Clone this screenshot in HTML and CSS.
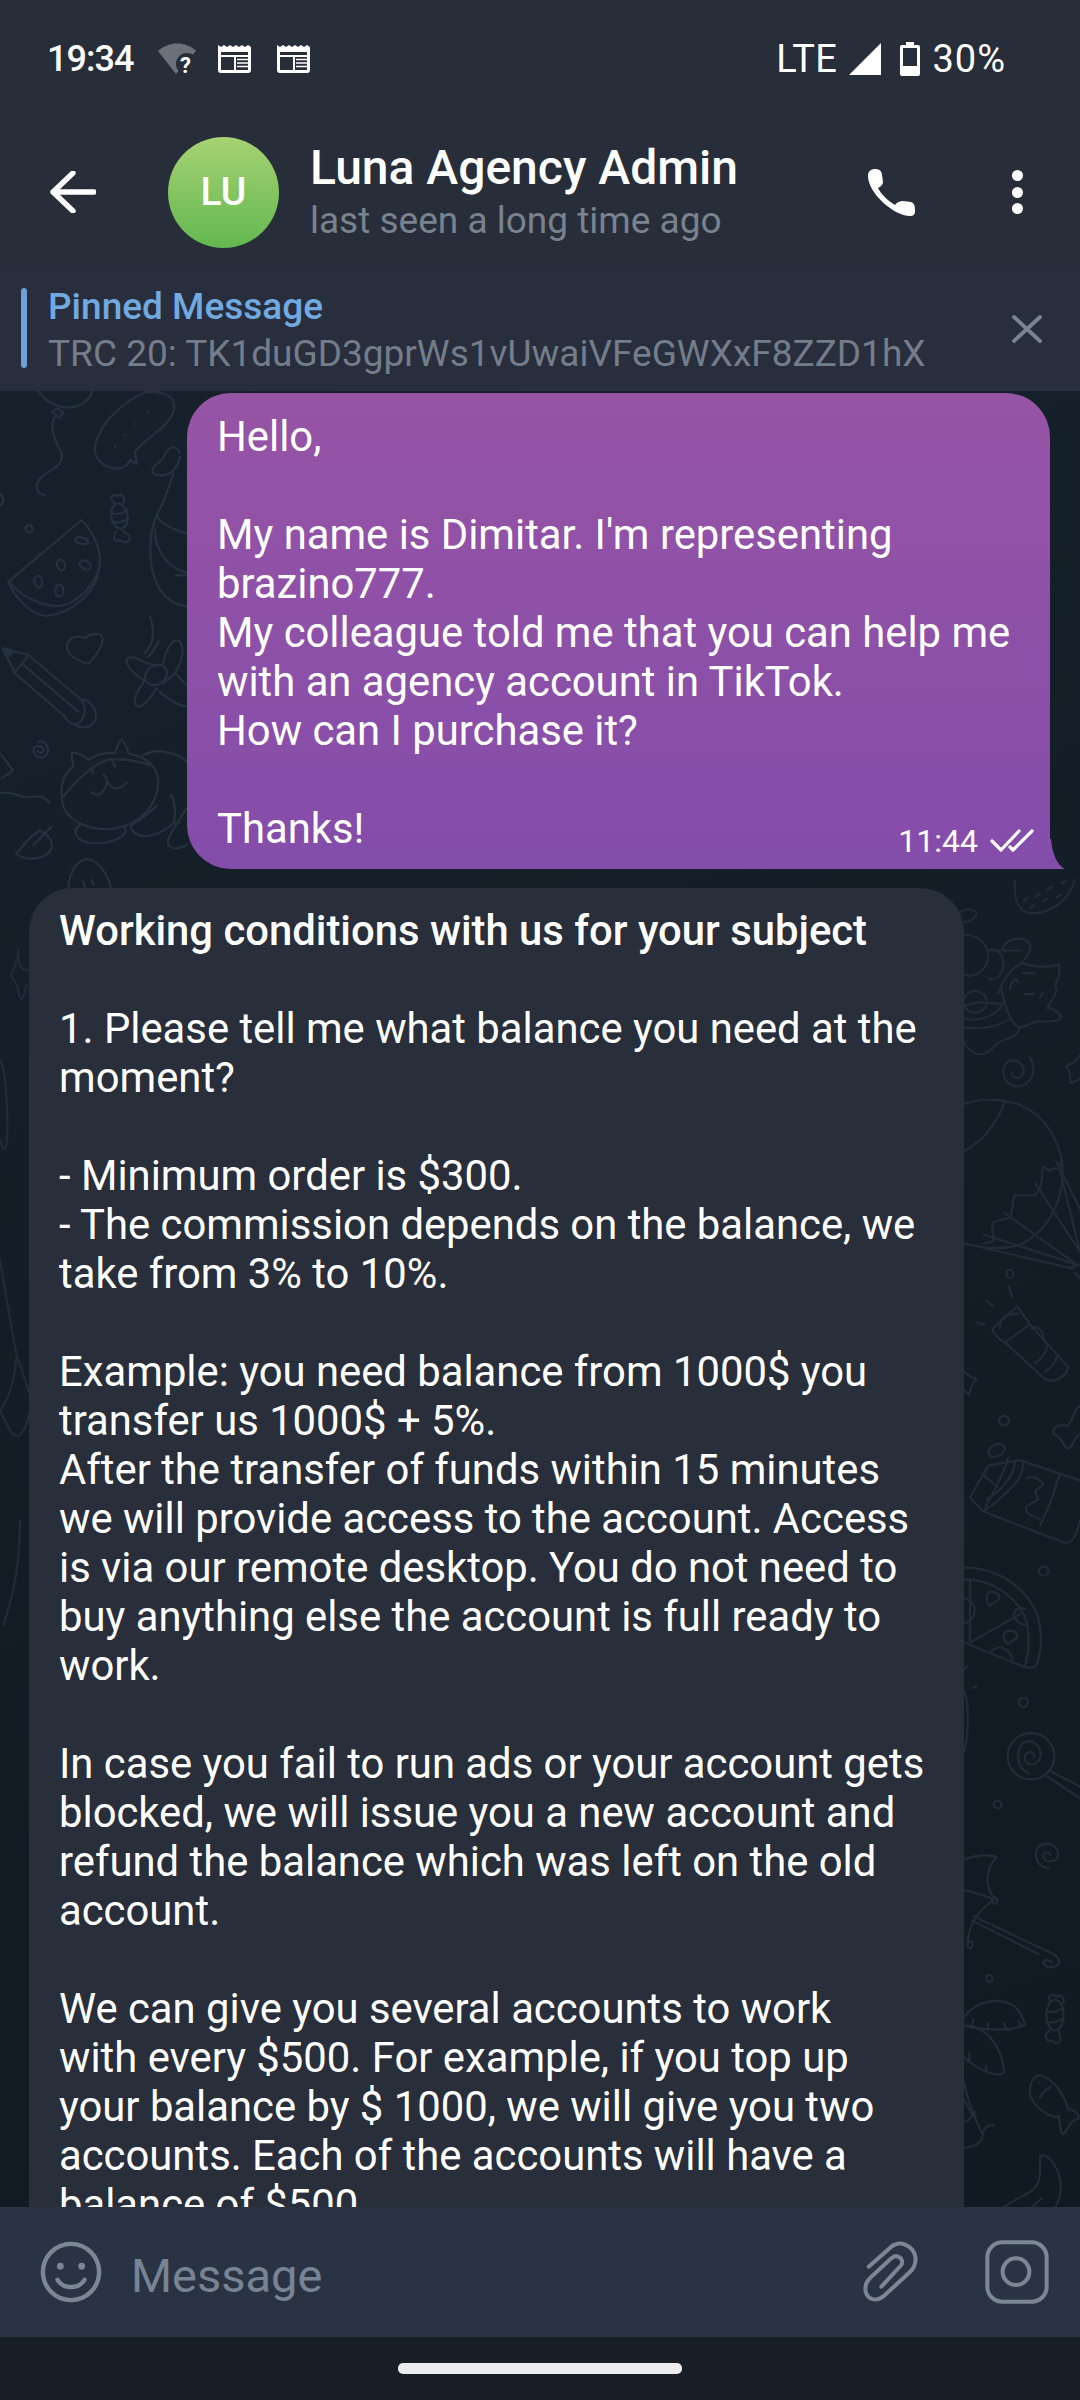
FILE: index.html
```html
<!DOCTYPE html>
<html lang="en">
<head>
    <meta charset="UTF-8">
    <meta name="viewport" content="width=device-width, initial-scale=1.0">
    <title>Luna Agency Admin</title>
    <link rel="stylesheet" href="styles.css">
</head>
<body>
    <div class="phone">
        <!-- status bar -->
        <div class="status-bar">
            <div class="status-left">
                <span class="clock">19:34</span>
                <svg class="wifi" width="38" height="32" viewBox="0 0 38 32">
                    <path d="M0 8 C11 -2 28 -2 38 8 L18 31 Z" fill="#6b707a"/>
                    <circle cx="29" cy="21" r="11" fill="#282d3a"/>
                    <text x="22" y="30" class="wifi-q">?</text>
                </svg>
                <svg width="33" height="30" viewBox="0 0 33 30" class="news">
                    <path d="M0 1 l3 2 3-2 3 2 3-2 3 2 3-2 3 2 3-2 3 2 3-2 3 2 V26 a3 3 0 0 1-3 3 H3 a3 3 0 0 1-3-3 Z" fill="#fff"/>
                    <path d="M3 8 H30 V26 H3 Z" fill="#282d3a"/>
                    <path d="M3 12 H30 M17 12 V26" stroke="#fff" stroke-width="2"/>
                    <path d="M19 15.500 H30 M19 19 H30 M19 22.500 H30" stroke="#fff" stroke-width="1.600"/>
                </svg>
                <svg width="33" height="30" viewBox="0 0 33 30" class="news">
                    <path d="M0 1 l3 2 3-2 3 2 3-2 3 2 3-2 3 2 3-2 3 2 3-2 3 2 V26 a3 3 0 0 1-3 3 H3 a3 3 0 0 1-3-3 Z" fill="#fff"/>
                    <path d="M3 8 H30 V26 H3 Z" fill="#282d3a"/>
                    <path d="M3 12 H30 M17 12 V26" stroke="#fff" stroke-width="2"/>
                    <path d="M19 15.500 H30 M19 19 H30 M19 22.500 H30" stroke="#fff" stroke-width="1.600"/>
                </svg>
            </div>
            <div class="status-right">
                <span class="lte">LTE</span>
                <svg width="32" height="32" viewBox="0 0 32 32"><path d="M32 0 V32 H0 Z" fill="#fff"/></svg>
                <svg class="battery" width="20" height="34" viewBox="0 0 20 34">
                    <path d="M6 0 H14 V3 H18 a2 2 0 0 1 2 2 V32 a2 2 0 0 1-2 2 H2 a2 2 0 0 1-2-2 V5 a2 2 0 0 1 2-2 H6 Z" fill="#fff"/>
                    <rect x="3" y="6" width="14" height="18" fill="#282d3a"/>
                </svg>
                <span class="pct">30%</span>
            </div>
        </div>

        <!-- chat header -->
        <div class="header">
            <svg class="back" width="46" height="42" viewBox="0 0 46 42">
                <path d="M3 21 H44 M23 2 L3 21 L23 40" fill="none" stroke="#fff" stroke-width="5.400" stroke-linecap="round" stroke-linejoin="round"/>
            </svg>
            <div class="avatar">LU</div>
            <div class="peer">
                <div class="peer-name">Luna Agency Admin</div>
                <div class="peer-seen">last seen a long time ago</div>
            </div>
            <svg class="call" width="47" height="47" viewBox="0 0 47 47">
                <path d="M0 7 C0 2 3 0 7 0 C11 0 14 2 14 6 L15 13 C15 16 12 18 10 19 C13 25 20 32 27 36 C29 33 32 32 35 32 L43 33 C46 34 47 36 47 42 C47 46 45 47 42 47 C26 47 0 24 0 7 Z" fill="#fff"/>
            </svg>
            <div class="dots"><i></i><i></i><i></i></div>
        </div>

        <!-- pinned message -->
        <div class="pinned">
            <div class="pin-bar"></div>
            <div class="pin-text">
                <div class="pin-title">Pinned Message</div>
                <div class="pin-body">TRC 20: TK1duGD3gprWs1vUwaiVFeGWXxF8ZZD1hX</div>
            </div>
            <svg class="pin-close" width="30" height="28" viewBox="0 0 30 28">
                <path d="M2 2 L28 26 M28 2 L2 26" stroke="#7b8491" stroke-width="3.800" stroke-linecap="round"/>
            </svg>
        </div>

        <!-- messages -->
        <div class="chat">
            <svg class="doodles" width="1080" height="1816" viewBox="0 0 1080 1816" fill="none" stroke-linecap="round" stroke-linejoin="round">
                <!-- left of the first bubble -->
                <g transform="translate(0,-1) scale(.3333)">
                    <path d="M115 0 C130 30 170 55 210 52 C250 50 270 25 280 0"/>
                    <path d="M155 65 L175 55 L190 70 L178 85 Z"/>
                    <path d="M165 80 C145 110 165 150 185 190 C195 225 150 240 125 260 C100 285 110 315 135 315"/>
                    <path d="M440 5 C380 30 300 90 285 170 C280 210 320 240 360 235 C375 232 385 220 390 210 L410 222 L405 185 C440 140 510 110 522 60 C528 20 500 5 440 5 Z"/>
                    <path d="M443 68 h1 M405 102 h1 M375 135 h1 M345 170 h1"/>
                    <path d="M540 190 C525 160 500 170 490 205 C470 225 450 235 460 250 C480 265 515 250 525 235 C535 220 540 205 540 200"/>
                    <path d="M520 250 C505 300 490 340 470 375 C445 440 440 530 480 600 C500 630 530 645 560 650"/>
                    <path d="M470 375 C480 400 520 420 560 430 M465 420 C465 480 500 530 560 548 M528 556 H560"/>
                    <ellipse cx="358" cy="378" rx="24" ry="38" transform="rotate(-10 358 378)"/>
                    <path d="M345 340 C325 325 335 310 350 318 C365 310 378 320 370 340"/>
                    <path d="M348 425 C335 445 345 460 360 450 C375 462 395 455 388 438 C382 430 372 428 368 420"/>
                    <path d="M335 370 C350 375 370 370 382 360 M335 395 C350 400 370 395 384 385"/>
                    <circle cx="87" cy="417" r="11"/>
                    <path d="M0 310 C15 320 10 345 0 345"/>
                    <path d="M245 390 L25 575 C40 620 100 680 140 678 C210 670 300 610 300 510 C298 465 275 420 245 390 Z"/>
                    <path d="M25 575 C70 625 130 650 180 648 C230 640 280 590 295 540"/>
                    <ellipse cx="245" cy="452" rx="20" ry="10" transform="rotate(15 245 452)"/>
                    <ellipse cx="183" cy="525" rx="12" ry="16" transform="rotate(-15 183 525)"/>
                    <ellipse cx="256" cy="525" rx="18" ry="12" transform="rotate(30 256 525)"/>
                    <ellipse cx="115" cy="575" rx="12" ry="18" transform="rotate(-10 115 575)"/>
                    <ellipse cx="178" cy="602" rx="12" ry="18"/>
                    <path d="M255 745 C225 730 195 750 202 780 C210 800 240 815 265 822 C285 800 310 770 308 745 C305 725 270 730 255 745 Z"/>
                    <path d="M8 775 L85 795 L245 930 C265 925 290 955 288 980 C285 1010 250 1020 225 1005 C215 1000 200 995 195 980 L45 850 Z"/>
                    <path d="M45 850 C50 830 70 825 85 795 M70 825 L235 965 M245 930 C265 960 250 995 225 1005"/>
                    <path class="ink" d="M8 775 L35 782 C38 795 25 800 20 800 Z"/>
                    <path d="M450 680 C465 720 460 760 435 790 M475 755 C465 775 455 790 445 800"/>
                    <ellipse cx="468" cy="855" rx="35" ry="28" transform="rotate(-35 468 855)"/>
                    <path d="M380 815 C375 800 400 795 440 820 L465 825 M380 815 C385 840 420 865 435 870"/>
                    <path d="M435 870 C410 905 395 935 410 948 C430 955 450 925 470 895"/>
                    <path d="M490 820 C495 780 520 740 540 755 C555 780 548 810 525 850 L490 880 M525 850 L560 885 M478 905 C500 925 530 945 560 950"/>
                    <path d="M115 1055 C140 1050 150 1080 140 1095 C125 1110 100 1100 100 1078 C105 1065 130 1065 130 1080 C128 1092 115 1090 112 1083"/>
                    <path d="M0 1090 L40 1142 L5 1165 M0 1210 C40 1200 60 1225 90 1222 C120 1215 135 1220 148 1238"/>
                    <path d="M220 1130 C180 1160 180 1210 190 1250 C210 1300 280 1325 350 1315 C420 1300 470 1250 475 1180 C475 1140 450 1105 400 1095 L385 1090 C380 1070 370 1050 365 1048 C355 1055 350 1075 345 1090 C310 1085 280 1100 265 1110 C250 1095 225 1085 215 1090 C215 1105 220 1120 220 1130"/>
                    <path d="M190 1220 C220 1180 270 1130 320 1110 C370 1105 420 1115 450 1125"/>
                    <path d="M310 1155 C330 1160 320 1205 295 1215 C285 1215 280 1212 275 1208 M325 1180 C340 1205 365 1195 380 1178 M275 1135 L280 1150 M338 1115 L345 1130"/>
                    <path d="M240 1305 C215 1320 225 1350 265 1358 C310 1365 375 1350 378 1320 L372 1310"/>
                    <path d="M430 1095 C470 1075 530 1085 560 1115"/>
                    <path d="M395 1300 C385 1320 410 1340 440 1338 C480 1335 510 1310 520 1298 C530 1270 525 1235 512 1215 M520 1298 H540"/>
                    <path d="M560 1255 C530 1300 495 1350 505 1365 C520 1385 550 1370 560 1365 M395 1305 C430 1285 450 1265 470 1248"/>
                    <path d="M155 1310 L100 1365 M120 1322 C90 1335 70 1370 48 1392 C80 1415 140 1410 155 1375 C160 1350 140 1330 120 1322"/>
                    <path d="M205 1500 C205 1440 240 1405 265 1408 C300 1415 325 1460 335 1500 M250 1475 L255 1495 M275 1470 L280 1485"/>
                </g>
                <!-- right of the second bubble, upper -->
                <g class="dim" transform="translate(960,489) scale(.3333,.4273)">
                    <path d="M165 0 C160 50 175 75 215 78 C260 78 320 60 345 0"/>
                    <path d="M190 50 l12 -8 M225 40 l14 -8 M262 22 l14 -6 M210 65 l14 -6 M248 50 l14 -6 M290 40 l14 -6 M305 8 l12 -6"/>
                    <path d="M0 75 C30 60 50 75 50 80 C45 90 25 100 10 98"/>
                    <path d="M12 130 C50 125 85 150 85 180 C80 215 40 230 12 222"/>
                    <path d="M85 165 C110 155 130 175 130 195 C130 225 110 235 85 232"/>
                    <path d="M130 165 C125 140 190 125 210 150 C215 170 190 190 180 195 M85 165 H180"/>
                    <path d="M115 265 C135 225 160 200 190 195 C220 205 270 205 298 198 C300 220 295 235 285 245 C295 255 285 270 280 275 L262 300 C285 300 305 315 302 325 C290 335 250 330 225 332 C200 340 190 345 178 345 C160 340 145 315 135 290 C130 270 120 255 125 245"/>
                    <path d="M150 255 C155 235 165 225 175 240 M190 218 H225 M193 267 H222 M240 275 L248 265"/>
                    <path d="M12 345 C60 350 110 345 150 325 M178 345 C175 365 150 370 130 375 C105 380 90 410 60 408 C35 405 15 390 12 375"/>
                    <ellipse cx="45" cy="285" rx="35" ry="25"/>
                    <path d="M12 295 C50 280 100 290 125 290 M12 325 C50 330 100 325 130 290"/>
                    <path d="M210 415 C235 450 210 485 165 483 C130 478 118 440 145 425 C170 415 195 435 190 450 C180 470 155 465 155 450"/>
                    <path d="M360 410 C350 420 340 430 318 435 C325 445 335 455 330 475 C340 475 350 470 360 465"/>
                    <path d="M12 525 C60 510 130 510 190 530 C260 555 310 620 308 690 C305 760 260 820 190 850 C130 870 60 860 12 850"/>
                    <path d="M135 518 C110 570 70 610 12 635"/>
                    <path d="M308 655 L295 675 L280 675 L268 680 L248 670 C245 690 250 720 225 738 L165 738 C155 750 160 770 150 790 L100 800 C90 815 105 830 100 845 L72 850"/>
                    <path d="M290 660 L360 770 M300 680 L360 870 M225 710 L360 870 M135 780 L350 900 M72 830 L350 900 M12 850 L340 910 M335 905 L360 900 M345 920 L360 930"/>
                    <circle cx="150" cy="922" r="10"/>
                    <path d="M145 950 L157 975 M80 985 L100 997 M50 1035 L73 1041"/>
                    <path d="M172 998 L98 1050 C95 1060 125 1080 135 1082 L210 1040 Z M120 1050 C115 1025 140 1015 175 1015"/>
                    <path d="M135 1082 L255 1168 C285 1180 320 1160 325 1140 L210 1040 M262 1090 C255 1110 240 1125 225 1130 M292 1115 C285 1130 270 1145 255 1150 M215 1050 C230 1040 250 1055 252 1075"/>
                    <path d="M12 1150 C25 1160 30 1165 50 1167 C45 1175 30 1180 28 1205 L12 1195"/>
                    <ellipse cx="132" cy="1265" rx="15" ry="11"/>
                    <path d="M360 1230 C340 1240 335 1275 320 1278 C300 1272 275 1280 280 1295 C300 1300 310 1320 320 1330 C340 1335 340 1300 360 1298"/>
                    <path d="M85 1370 L30 1445 L70 1478 L310 1550 C340 1555 350 1530 360 1500 M85 1370 L180 1358 L360 1405"/>
                    <path d="M68 1390 L110 1420 M145 1352 C130 1390 110 1420 75 1470 M190 1360 C190 1410 140 1430 110 1455 L70 1478 M165 1362 C160 1400 120 1430 80 1450 M300 1390 C285 1420 275 1460 240 1510"/>
                    <path d="M200 1400 C230 1390 245 1410 250 1415 L225 1430 L235 1450 L200 1465 C190 1480 215 1490 240 1495"/>
                    <ellipse cx="110" cy="1335" rx="25" ry="14" transform="rotate(-15 110 1335)"/>
                </g>
                <!-- right of the second bubble, lower -->
                <g class="dim" transform="translate(960,1159) scale(.3333,.4209)">
                    <path d="M12 42 C100 40 190 80 230 150 C250 200 245 250 225 278 L200 280 L12 220"/>
                    <path d="M12 70 C100 70 170 110 200 170 C210 210 205 250 195 275"/>
                    <path d="M30 70 V220 L185 150 M160 155 C170 130 195 140 195 140 M160 155 C170 175 195 180 200 175"/>
                    <path d="M12 115 C50 120 60 160 12 175 M95 240 C115 225 145 230 158 260"/>
                    <path d="M82 105 C90 95 120 100 118 115 C110 125 95 125 92 132 C80 130 78 115 82 105 Z"/>
                    <path d="M132 200 C140 188 172 190 172 205 C165 218 150 215 148 222 C135 222 128 210 132 200 Z"/>
                    <ellipse cx="251" cy="50" rx="14" ry="11"/>
                    <ellipse cx="190" cy="362" rx="14" ry="11"/>
                    <path d="M40 328 L50 324 M12 285 L22 275 M12 335 C25 355 30 430 12 480"/>
                    <ellipse cx="213" cy="490" rx="70" ry="55"/>
                    <path d="M205 530 C170 520 165 475 190 458 C220 445 250 470 240 495 C225 520 190 510 195 488 C205 475 225 480 222 492"/>
                    <path d="M270 525 L360 562 M262 538 L360 590"/>
                    <ellipse cx="113" cy="605" rx="12" ry="9"/>
                    <path d="M265 755 C230 755 220 725 235 705 C260 690 295 700 295 725 C290 745 250 745 250 725 C255 715 270 720 272 725"/>
                    <path d="M12 735 C50 725 90 722 110 730 C85 750 65 790 105 830 M12 808 C50 815 85 825 105 830 M105 830 C60 850 25 890 22 935"/>
                    <circle cx="104" cy="833" r="8"/><circle cx="30" cy="938" r="8"/>
                    <path d="M40 870 L240 945 C270 955 300 965 298 980 C290 995 255 995 250 980 C255 970 270 975 275 980 M35 880 L235 960"/>
                    <ellipse cx="88" cy="1018" rx="10" ry="8"/>
                    <ellipse cx="285" cy="1105" rx="26" ry="36"/>
                    <path d="M270 1072 C260 1055 280 1055 290 1062 C300 1055 315 1060 310 1078 M270 1142 C250 1150 255 1170 275 1165 C285 1175 305 1175 300 1155 L295 1140"/>
                    <path d="M260 1095 C275 1100 295 1095 310 1088 M260 1120 C275 1125 295 1120 310 1112"/>
                    <path d="M12 1110 C50 1070 120 1060 165 1085 C185 1100 192 1120 196 1128 C150 1145 60 1140 12 1130"/>
                    <path d="M40 1115 L35 1135 M85 1125 L80 1140 M130 1125 L145 1142 M175 1120 L185 1130"/>
                    <path d="M12 1130 C80 1130 125 1180 133 1240 C120 1255 60 1240 12 1205 M28 1195 V1215 M78 1225 V1240"/>
                    <path d="M237 1248 C215 1250 205 1280 212 1300 C235 1335 280 1350 297 1345 C300 1370 300 1385 310 1388 C325 1380 325 1355 355 1352 C360 1340 340 1330 325 1328 C310 1290 280 1255 237 1248 Z"/>
                    <path d="M240 1300 C250 1285 265 1280 272 1275 M238 1265 h1"/>
                    <path d="M12 1265 C20 1300 45 1350 68 1390 C65 1410 40 1420 12 1420 M12 1305 L35 1340 M12 1360 C25 1355 40 1345 45 1335 M68 1390 C70 1370 85 1365 103 1367"/>
                    <path d="M240 1440 C240 1470 245 1500 220 1520 C190 1535 150 1550 125 1565 M240 1440 C270 1430 305 1480 302 1520 C300 1540 290 1560 280 1568 M218 1560 L245 1540"/>
                </g>
                <!-- left margin beside the second bubble -->
                <g class="dim" transform="translate(0,489) scale(.3333,1)">
                    <path d="M55 70 C55 85 60 90 85 90 M55 70 C50 85 40 90 33 95 C40 100 50 102 55 110 C60 125 70 120 80 105"/>
                    <path d="M0 180 C20 190 25 240 20 265 C10 275 5 265 0 260"/>
                    <path d="M0 380 C20 420 35 450 50 475 C45 500 25 520 0 530 M50 475 L90 515 M0 530 C20 545 40 560 60 555 C75 550 85 540 90 530"/>
                    <path d="M60 640 C60 680 45 710 10 745"/>
                </g>
            </svg>

            <div class="msg-out">
                <p class="msg-text">Hello,

My name is Dimitar. I'm representing
brazino777.
My colleague told me that you can help me
with an agency account in TikTok.
How can I purchase it?

Thanks!</p>
                <div class="msg-meta">
                    <span>11:44</span>
                    <svg width="44" height="24" viewBox="0 0 44 24">
                        <path d="M2 12 L11 21 L29 2 M20 18 L23 21 L42 2" fill="none" stroke="#fff" stroke-width="3.200" stroke-linecap="round" stroke-linejoin="round"/>
                    </svg>
                </div>
                <svg class="msg-tail" width="24" height="30" viewBox="0 0 24 30"><path d="M0 0 H10 C11 14 16 26 24 30 H0 Z" fill="#844daa"/></svg>
            </div>

            <div class="msg-in">
                <p class="msg-text"><b>Working conditions with us for your subject</b>

1. Please tell me what balance you need at the
moment?

- Minimum order is $300.
- The commission depends on the balance, we
take from 3% to 10%.

Example: you need balance from 1000$ you
transfer us 1000$ + 5%.
After the transfer of funds within 15 minutes
we will provide access to the account. Access
is via our remote desktop. You do not need to
buy anything else the account is full ready to
work.

In case you fail to run ads or your account gets
blocked, we will issue you a new account and
refund the balance which was left on the old
account.

We can give you several accounts to work
with every $500. For example, if you top up
your balance by $ 1000, we will give you two
accounts. Each of the accounts will have a
balance of $500.</p>
            </div>
        </div>

        <!-- input -->
        <div class="composer">
            <svg class="smile" width="62" height="62" viewBox="0 0 64 64" fill="none" stroke="#7b8795" stroke-width="4.500" stroke-linecap="round">
                <circle cx="32" cy="32" r="29"/>
                <circle cx="21" cy="26" r="3.500" fill="#7b8795" stroke="none"/>
                <circle cx="43" cy="26" r="3.500" fill="#7b8795" stroke="none"/>
                <path d="M18 40 C24 50 40 50 46 40"/>
            </svg>
            <div class="composer-ph">Message</div>
            <svg class="clip" width="57" height="65" viewBox="40 35 171 195" fill="none" stroke="#7b8795" stroke-width="12" stroke-linecap="round" stroke-linejoin="round">
                <path d="M57 115 L125 55 C150 35 190 50 197 85 C200 105 195 118 180 132 L100 205 C80 220 55 215 48 190 C45 170 50 160 65 145 L125 90 C140 75 165 90 155 110 L95 175"/>
            </svg>
            <svg class="camera" width="64" height="64" viewBox="405 35 192 192" fill="none" stroke="#7b8795" stroke-width="12">
                <rect x="412" y="42" width="178" height="178" rx="45"/>
                <circle cx="498" cy="130" r="40"/>
            </svg>
        </div>

        <!-- nav -->
        <div class="nav-bar"><div class="nav-pill"></div></div>
    </div>
</body>
</html>
```

FILE: styles.css
```css
* { padding: 0; margin: 0; box-sizing: border-box; }
body { width: 1080px; height: 2400px; overflow: hidden; background: #131c25; font-family: Roboto, "Liberation Sans", sans-serif; color: #fff; }
.phone { width: 1080px; height: 2400px; display: flex; flex-direction: column; }

/* status bar */
.status-bar { height: 118px; background: #282d3a; display: flex; justify-content: space-between; align-items: center; padding: 0 74px 0 47px; }
.status-left { display: flex; align-items: center; }
.status-right { display: flex; align-items: center; }
.clock { font-size: 36px; font-weight: 500; letter-spacing: -1px; width: 111px; }
.wifi { margin-right: 22px; overflow: visible; }
.wifi-q { font-size: 22px; font-weight: 700; fill: #fff; }
.news { margin-right: 26px; }
.lte { font-size: 38px; margin-right: 12px; letter-spacing: 0.5px; }
.battery { margin: 0 12px 0 19px; }
.pct { font-size: 38px; letter-spacing: 1px; }

/* header */
.header { height: 147px; background: #282d3a; display: flex; align-items: center; padding: 2px 57px 0 50px; border-bottom: 1px solid #262b37; }
.back { margin-right: 72px; }
.avatar { width: 111px; height: 111px; border-radius: 50%; background: linear-gradient(#a6d273, #63b84f); display: flex; align-items: center; justify-content: center; font-size: 39px; font-weight: 500; margin-right: 31px; }
.peer { flex: 1; padding-top: 2px; }
.peer-name { font-size: 48px; font-weight: 500; line-height: 54px; }
.peer-seen { font-size: 37px; line-height: 50px; color: #79838f; padding-top: 1px; }
.call { margin-right: 97px; }
.dots { display: flex; flex-direction: column; gap: 5.500px; }
.dots i { display: block; width: 11px; height: 11px; border-radius: 50%; background: #fff; }

/* pinned */
.pinned { height: 126px; background: #282e3c; display: flex; align-items: center; padding: 0 38px 0 21px; }
.pin-bar { width: 6px; height: 80px; border-radius: 3px; background: #6ea2d9; margin-right: 21px; }
.pin-text { flex: 1; padding-top: 6px; }
.pin-title { font-size: 37px; font-weight: 500; line-height: 46px; color: #71a9e1; }
.pin-body { font-size: 37px; line-height: 48px; color: #747d8a; }
.pin-close { margin-top: 2px; }

/* messages */
.chat { position: relative; flex: 1; overflow: hidden; background: linear-gradient(160deg, #16212b, #111922); padding-top: 2px; }
.doodles { position: absolute; left: 0; top: 0; }
.doodles * { vector-effect: non-scaling-stroke; stroke: #25323d; stroke-width: 2.200; }
.doodles .dim * { stroke: #212c38; }
.doodles .ink { fill: #25323d; }
.msg-text { white-space: pre-line; font-size: 41.800px; line-height: 49px; }
.msg-text b { font-weight: 500; }
.msg-out { position: relative; width: 863px; margin-left: 187px; height: 476px; padding: 19px 30px 0; border-radius: 44px 44px 8px 44px; background: linear-gradient(#9654a5, #844daa); }
.msg-meta { position: absolute; right: 16px; bottom: 9px; display: flex; align-items: center; gap: 12px; font-size: 32px; }
.msg-tail { position: absolute; right: -15px; bottom: 0; }
.msg-in { position: relative; width: 935px; margin: 19px 0 0 29px; padding: 18px 30px 40px; border-radius: 44px 44px 0 0; background: #282e3a; }

/* input */
.composer { height: 130px; background: #2a3344; display: flex; align-items: center; padding: 0 31px 0 40px; }
.composer-ph { flex: 1; font-size: 47px; color: #788493; margin-left: 29px; padding-top: 6px; }
.camera { margin-left: 65px; }

/* nav */
.nav-bar { height: 63px; background: #171e26; display: flex; justify-content: center; padding-top: 26px; }
.nav-pill { width: 284px; height: 11px; border-radius: 5px; background: #ececec; }
```
